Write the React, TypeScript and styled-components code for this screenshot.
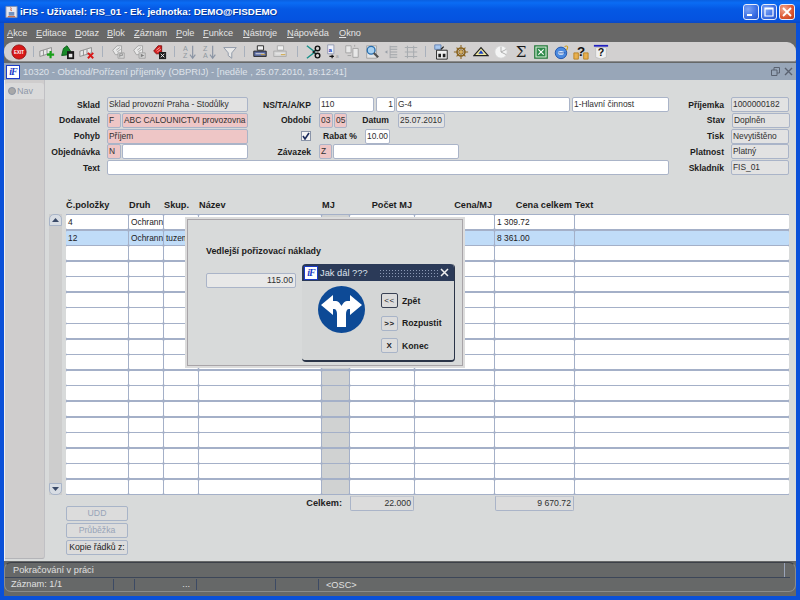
import React from "react";
import styled, { createGlobalStyle } from "styled-components";

const Global = createGlobalStyle`
    html, body { margin: 0; padding: 0; background: #0a50d8; overflow: hidden; }
    * { box-sizing: border-box; }
`

const font = `"Liberation Sans", Arial, sans-serif`

// Outer window

const Desk = styled.div`
    width: 800px;
    height: 600px;
    display: flex;
    flex-direction: column;
    font-family: ${font};
    font-size: 8.4px;
    color: #222;
    background: #0a50d8;
    overflow: hidden;
`

const TitleBar = styled.div`
    height: 23px;
    flex: none;
    display: flex;
    align-items: center;
    padding: 0 5px 0 5px;
    background: linear-gradient(180deg, #0a5fe0 0%, #0a6cf4 12%, #0558e4 40%, #0553e0 85%, #0a48c4 100%);
`

const TitleText = styled.span`
    margin-left: 2px;
    color: #fff;
    font-size: 9.8px;
    font-weight: bold;
    text-shadow: 1px 1px 0 #0a3a9a;
`

const WinButtons = styled.div`
    margin-left: auto;
    display: flex;
    gap: 2px;
`

const WinButton = styled.div<{ $close?: boolean }>`
    width: 16px;
    height: 16px;
    border: 1px solid #e8eefc;
    border-radius: 3px;
    display: flex;
    align-items: center;
    justify-content: center;
    background: ${({ $close }) => $close
        ? "radial-gradient(circle at 30% 30%, #f0a890, #dc5530 60%, #b83a18)"
        : "radial-gradient(circle at 30% 30%, #7ea4f4, #3a6ee4 60%, #2250c8)"};
`

const Frame = styled.div`
    flex: 1;
    display: flex;
    flex-direction: column;
    margin: 0 4px 4px 4px;
    min-height: 0;
    background: #666868;
`

const MenuBar = styled.div`
    height: 19px;
    flex: none;
    display: flex;
    align-items: center;
    padding-left: 3px;
    background: #686868;
    color: #e4e4e4;
    font-size: 9.2px;
`

const MenuItem = styled.span<{ $w: number }>`
    width: ${({ $w }) => $w}px;
    flex: none;
    u { text-decoration: underline; }
`

const ToolBar = styled.div`
    height: 20px;
    flex: none;
    display: flex;
    align-items: center;
    padding-left: 5px;
    background: #d2d0d0;
    border-radius: 9px 9px 2px 9px;
    border-bottom: 1px solid #8a8a8a;
`

const ToolSlot = styled.div<{ $w?: number }>`
    width: ${({ $w }) => $w ?? 20}px;
    height: 18px;
    flex: none;
    display: flex;
    align-items: center;
    justify-content: center;
`

const ToolSep = styled.div<{ $w: number }>`
    width: 1px;
    height: 11px;
    margin: 0 ${({ $w }) => ($w - 1) / 2}px;
    flex: none;
    background: #a8b0bc;
`

// Inner document window

const DocTitle = styled.div`
    height: 17px;
    flex: none;
    margin-top: 1px;
    display: flex;
    align-items: center;
    padding: 0 3px 0 2px;
    background: #98a6b8;
    color: #dfe3ea;
    font-size: 9.4px;
`

const DocTitleText = styled.span`
    margin-left: 3px;
`

const DocControls = styled.div`
    margin-left: auto;
    display: flex;
    gap: 4px;
    align-items: center;
`

const Logo = styled.div`
    width: 14px;
    height: 14px;
    flex: none;
    background: #fff;
    border: 1px solid #1a3ac8;
    color: #1a3ac8;
    font: italic bold 10px/12px "Liberation Serif", serif;
    text-align: center;
    letter-spacing: -1px;
`

const Body = styled.div`
    flex: 1;
    display: flex;
    min-height: 0;
    background: #d8dada;
    border-left: 1px solid #f0f0f0;
`

const NavPane = styled.div`
    width: 40px;
    flex: none;
    background: #cfcdcd;
    border-right: 1px solid #c0c0c4;
    border-bottom: 1px solid #b4b4b8;
    border-radius: 0 0 3px 0;
    padding-top: 3px;
    margin-bottom: 2px;
`

const NavTab = styled.div`
    height: 16px;
    display: flex;
    align-items: center;
    gap: 1px;
    padding-left: 3px;
    background: #dadada;
    border-radius: 3px 3px 0 0;
    color: #8e98a8;
    font-size: 9px;
`

const NavDot = styled.span`
    width: 8px;
    height: 8px;
    border-radius: 50%;
    background: #a8a8a8;
    border: 1px solid #8a94a4;
`

const Main = styled.div`
    flex: 1;
    position: relative;
    min-width: 0;
`

// Header form

const Form = styled.div`
    display: flex;
    flex-direction: column;
    gap: 0.75px;
    padding-top: 17px;
`

const FormRow = styled.div`
    display: flex;
    align-items: center;
    height: 15px;
`

const Label = styled.div<{ $w: number; $ml?: number; $left?: boolean }>`
    width: ${({ $w }) => $w}px;
    margin-left: ${({ $ml }) => $ml ?? 0}px;
    flex: none;
    text-align: ${({ $left }) => $left ? "left" : "right"};
    font-size: 8.6px;
    font-weight: bold;
    color: #1c1c1c;
    white-space: nowrap;
`

const toneBg: Record<string, string> = {
    white: "#ffffff",
    pink: "#eec6c6",
    gray: "#e2e2e2",
}

const Field = styled.div<{ $w: number; $ml?: number; $tone?: string; $right?: boolean }>`
    width: ${({ $w }) => $w}px;
    margin-left: ${({ $ml }) => $ml ?? 0}px;
    height: 15px;
    flex: none;
    padding: 0 1px;
    overflow: hidden;
    white-space: nowrap;
    line-height: 13px;
    font-size: 8.4px;
    text-align: ${({ $right }) => $right ? "right" : "left"};
    color: #303030;
    background: ${({ $tone }) => toneBg[$tone ?? "white"]};
    border: 1px solid #aab4c8;
    border-radius: 2px;
`

const Check = styled.div`
    width: 10px;
    height: 10px;
    margin-left: 53px;
    flex: none;
    background: #f4f4f4;
    border: 1px solid #8a94a8;
    display: flex;
    align-items: center;
    justify-content: center;
`

// Block of rows

const columns = "62px 34px 34px 122px 27px 64px 79px 79px 214px"

const TableHead = styled.div`
    display: grid;
    grid-template-columns: ${columns};
    gap: 1px;
    margin: 24px 0 0 21px;
    height: 15px;
    align-items: start;
    padding-top: 1px;
`

const HeadCell = styled.div<{ $right?: boolean }>`
    font-size: 9.2px;
    font-weight: bold;
    color: #1c1c1c;
    white-space: nowrap;
    text-align: ${({ $right }) => $right ? "right" : "left"};
    padding-right: ${({ $right }) => $right ? "2px" : "0"};
`

const TableWrap = styled.div`
    display: flex;
    padding-left: 4px;
`

const Scroller = styled.div`
    width: 13px;
    height: 281px;
    flex: none;
    margin-right: 4px;
    display: flex;
    flex-direction: column;
    background: #cdcdcd;
`

const ScrollBtn = styled.div<{ $down?: boolean }>`
    height: 12px;
    flex: none;
    display: flex;
    align-items: center;
    justify-content: center;
    margin-top: ${({ $down }) => $down ? "auto" : "0"};
    background: #d8dde4;
    border: 1px solid #a8b4c8;
    border-radius: ${({ $down }) => $down ? "0 0 5px 5px" : "5px 5px 0 0"};
`

const Table = styled.div`
    display: grid;
    grid-template-columns: ${columns};
    grid-template-rows: repeat(18, 1fr);
    gap: 1.5px 1px;
    height: 281px;
    background: #a4b0c8;
    border-top: 1px solid #a4b0c8;
    border-bottom: 1px solid #a4b0c8;
`

const Cell = styled.div<{ $on?: boolean; $gray?: boolean }>`
    padding: 0 2px;
    overflow: hidden;
    white-space: nowrap;
    font-size: 8.4px;
    line-height: 14px;
    color: #222;
    border-radius: 1px;
    background: ${({ $on, $gray }) => $on ? "#c0dcf8" : $gray ? "#d0d2d2" : "#ffffff"};
`

const TableFoot = styled.div`
    display: grid;
    grid-template-columns: ${columns};
    gap: 1px;
    margin: 1px 0 0 21px;
    align-items: start;
`

const ButtonStack = styled.div`
    display: flex;
    flex-direction: column;
    gap: 2px;
    padding-top: 10px;
`

const FormButton = styled.div<{ $off?: boolean }>`
    height: 15px;
    border: 1px solid #a8b4c8;
    border-radius: 2px;
    background: #dcdcdc;
    text-align: center;
    line-height: 13px;
    font-size: 8.7px;
    white-space: nowrap;
    color: ${({ $off }) => $off ? "#98a4b8" : "#222"};
`

const TotalLabel = styled.div`
    grid-column: 4 / span 2;
    padding-right: 7px;
    text-align: right;
    font-size: 9.2px;
    font-weight: bold;
    line-height: 15px;
`

const TotalField = styled.div<{ $col: number }>`
    grid-column: ${({ $col }) => $col};
    height: 15px;
    padding: 0 2px;
    text-align: right;
    line-height: 13px;
    font-size: 8.7px;
    color: #303030;
    background: #dcdcdc;
    border: 1px solid #aab4c8;
    border-top-color: #c4c8d0;
    border-radius: 0 0 2px 2px;
`

// Overlay with the dialog

const Sheet = styled.div`
    position: absolute;
    left: 142px;
    top: 139px;
    width: 276px;
    height: 147px;
    background: #d8dada;
    border: 1px solid #a8a4a8;
    outline: 2px solid #dcdcdc;
`

const SheetTitle = styled.div`
    margin: 26px 0 0 18px;
    font-size: 8.9px;
    font-weight: bold;
    color: #1c1c1c;
`

const SheetValue = styled.div`
    margin: 17px 0 0 18px;
    width: 90px;
    height: 15px;
    padding: 0 2px;
    text-align: right;
    line-height: 13px;
    font-size: 8.7px;
    color: #303030;
    background: #e8e8e8;
    border: 1px solid #aab4c8;
    border-radius: 2px;
`

const Dialog = styled.div`
    position: absolute;
    left: 114px;
    top: 44px;
    width: 153px;
    height: 98px;
    background: #d4d6d6;
    border-right: 1px solid #2a3448;
    border-bottom: 2px solid #2a3448;
    border-radius: 4px;
    display: flex;
    flex-direction: column;
`

const DialogBar = styled.div`
    height: 17px;
    flex: none;
    display: flex;
    align-items: center;
    padding: 0 5px 0 2px;
    background: #2b3a58;
    border-radius: 4px 4px 0 0;
    color: #dfe4ee;
    font-size: 9.3px;
`

const DialogCaption = styled.span`
    margin-left: 2px;
    width: 56px;
    flex: none;
    white-space: nowrap;
`

const DialogGrip = styled.div`
    width: 61px;
    height: 8px;
    margin-left: 3px;
    flex: none;
    background-image: radial-gradient(#8a98b4 0.6px, transparent 0.8px);
    background-size: 3px 3px;
`

const DialogClose = styled.div`
    margin-left: auto;
    display: flex;
`

const DialogBody = styled.div`
    flex: 1;
    display: flex;
    min-height: 0;
`

const SignBox = styled.div`
    width: 79px;
    flex: none;
    padding: 5px 0 0 16px;
`

const Choices = styled.div`
    display: flex;
    flex-direction: column;
    gap: 7.5px;
    padding-top: 12px;
`

const Choice = styled.div`
    display: flex;
    align-items: center;
    gap: 4px;
    font-size: 8.7px;
    font-weight: bold;
    color: #1c1c1c;
`

const ChoiceKey = styled.div<{ $focus?: boolean }>`
    width: 17px;
    height: 15px;
    display: flex;
    align-items: center;
    justify-content: center;
    font-size: 8px;
    font-weight: ${({ $focus }) => $focus ? "normal" : "bold"};
    letter-spacing: 0.5px;
    background: #dcdcdc;
    border: 1px solid ${({ $focus }) => $focus ? "#3a4254" : "#a8b4c8"};
    border-radius: 2px;
`

// Status area

const Status = styled.div`
    height: 30px;
    flex: none;
    margin: 1px 0 4px 0;
    display: flex;
    flex-direction: column;
    background: #666868;
    border: 1px solid #8a8c8c;
    border-top: 1px solid #3c4048;
    border-radius: 7px;
    color: #e0e0e0;
    font-size: 9.2px;
`

const StatusTop = styled.div`
    height: 15px;
    flex: none;
    display: flex;
    align-items: center;
    padding-left: 8px;
    border-bottom: 1px solid #3c4658;
    margin-right: 5px;
`

const StatusGrip = styled.div`
    margin-left: auto;
    width: 1px;
    height: 14px;
    margin-right: 5px;
    background: #9aa4b8;
`

const StatusBottom = styled.div`
    flex: 1;
    display: flex;
    align-items: center;
    padding-left: 6px;
`

const StatusCell = styled.div<{ $w: number; $right?: boolean }>`
    width: ${({ $w }) => $w}px;
    height: 11px;
    line-height: 11px;
    flex: none;
    padding-right: 6px;
    text-align: ${({ $right }) => $right ? "right" : "left"};
    border-right: 1px solid #3c4a64;
`

const StatusText = styled.div`
    padding-left: 7px;
`

// Drawings

const I = ({ w, children }: { w?: number; children: React.ReactNode }) => (
    <ToolSlot $w={w}>
        <svg width="16" height="16" viewBox="0 0 18 18">{children}</svg>
    </ToolSlot>
)

const Row3d = ({ c = "#8a8a8a" }: { c?: string }) => (
    <g fill="#e8e8e8" stroke={c} strokeWidth="1">
        <path d="M1 8 L14 4 V10 L1 14 Z" />
        <path d="M5 7 V13 M9 6 V12" />
    </g>
)

const Sheet3d = ({ c = "#a0a0a0" }: { c?: string }) => (
    <g>
        <path d="M3 7 L8 2 H13 V12 H6 Z" fill="#e8e8e8" stroke={c} />
        <path d="M7 7 L11 4 M8 9 L12 6" stroke={c} />
    </g>
)

const Printer = ({ c, body }: { c: string; body: string }) => (
    <g>
        <path d="M6 2 H13 V7 H6 Z" fill="#f0f0f0" stroke={c} />
        <path d="M2 8 H16 V14 H2 Z" fill={body} stroke={c} />
        <path d="M4 11 H14" stroke="#e8e8e8" />
        <path d="M10 12 H15" stroke="#d0a030" />
    </g>
)

function Tools() {
    const p = 19.4
    return (
        <ToolBar>
            <I>
                <circle cx="9" cy="9" r="8" fill="#d81818" stroke="#901010" />
                <text x="9" y="11" textAnchor="middle" fontSize="5" fontWeight="bold" fill="#fff" fontFamily="Liberation Sans">EXIT</text>
            </I>
            <ToolSep $w={8} />
            <I><Row3d /><path d="M13 8 V16 M9 12 H17" stroke="#18a018" strokeWidth="2.4" /></I>
            <I>
                <path d="M3 13 L5 5 L9 2 L13 8 L11 12 Z" fill="#188a28" stroke="#0a5a18" />
                <path d="M9 8 H17 V17 H9 Z" fill="#181818" />
                <path d="M11 11 H15 V15 H11 Z" fill="#e8e8e8" />
            </I>
            <I><Row3d /><path d="M10 10 L16 16 M16 10 L10 16" stroke="#d81818" strokeWidth="2.2" /></I>
            <ToolSep $w={11} />
            <I><Sheet3d /><path d="M9 10 H16 V16 H9 Z" fill="#d8d8d8" stroke="#a0a0a0" /><path d="M11 15 V11 H14 V13 H11" fill="none" stroke="#909090" /></I>
            <I w={21}><Sheet3d /><path d="M9 10 H16 V16 H9 Z" fill="#d8d8d8" stroke="#a0a0a0" /><path d="M11 11 L15 13 L11 15 Z" fill="#808080" /></I>
            <I>
                <path d="M3 8 L8 2 H12 V11 H6 Z" fill="#d82020" stroke="#801010" />
                <path d="M6 7 L10 4 M7 9 L11 6" stroke="#f8b0b0" />
                <path d="M9 9 H17 V17 H9 Z" fill="#202020" />
                <path d="M11 11 L15 15 M15 11 L11 15" stroke="#fff" />
            </I>
            <ToolSep $w={11} />
            <I>
                <text x="1" y="8" fontSize="8" fill="#9098a0" fontFamily="Liberation Sans">A</text>
                <text x="1" y="16" fontSize="8" fill="#9098a0" fontFamily="Liberation Sans">Z</text>
                <path d="M12 2 V15 M9 12 L12 16 L15 12" fill="none" stroke="#8a94a4" strokeWidth="1.3" />
            </I>
            <I>
                <text x="1" y="8" fontSize="8" fill="#9098a0" fontFamily="Liberation Sans">Z</text>
                <text x="1" y="16" fontSize="8" fill="#9098a0" fontFamily="Liberation Sans">A</text>
                <path d="M12 2 V15 M9 12 L12 16 L15 12" fill="none" stroke="#8a94a4" strokeWidth="1.3" />
            </I>
            <I><path d="M2 4 H16 L11 10 V16 L7 13 V10 Z" fill="#e8e8e8" stroke="#8a94a4" /></I>
            <ToolSep $w={9} />
            <I w={21}><Printer c="#202020" body="#5a6aa0" /></I>
            <I><Printer c="#a8a8a8" body="#d8d8d8" /></I>
            <ToolSep $w={14} />
            <I w={p}>
                <path d="M1 2 L10 9 L1 16" fill="none" stroke="#189088" strokeWidth="1.6" />
                <circle cx="13" cy="5" r="2.6" fill="none" stroke="#111" strokeWidth="1.6" />
                <circle cx="13" cy="13" r="2.6" fill="none" stroke="#111" strokeWidth="1.6" />
                <path d="M11 7 L8 9 L11 11" fill="none" stroke="#111" strokeWidth="1.4" />
            </I>
            <I w={p}>
                <path d="M3 1 H10 V11 H3 Z" fill="#eef0f8" stroke="#9098b0" />
                <text x="4" y="9" fontSize="7" fontWeight="bold" fill="#1838b8" fontFamily="Liberation Sans">a</text>
                <path d="M5 14 H10 M8 12 V16" stroke="#111" strokeWidth="1.3" />
                <text x="12" y="16" fontSize="6" fill="#a0a0a0" fontFamily="Liberation Sans">a</text>
            </I>
            <I w={p}>
                <path d="M2 2 H8 V10 H2 Z" fill="#e8e8e8" stroke="#a0a0a0" />
                <path d="M10 5 H16 V15 H10 Z" fill="#e8e8e8" stroke="#a0a0a0" />
                <path d="M4 13 H8 M12 3 V1" stroke="#a0a0a0" />
            </I>
            <I w={p}>
                <path d="M3 2 H14 V16 H3 Z" fill="#e4e4e4" stroke="#a0a0a0" />
                <circle cx="8" cy="7" r="4.4" fill="#a8d0f0" stroke="#2a70b0" strokeWidth="1.5" />
                <path d="M11 10 L16 15" stroke="#505050" strokeWidth="2.4" />
            </I>
            <I w={p}>
                <path d="M2 9 L5 7 V11 Z" fill="#9aa0a8" />
                <path d="M8 3 H16 M8 6 H16 M8 9 H16 M8 12 H16 M8 15 H16" stroke="#a0a4a8" strokeWidth="1.2" />
                <path d="M8 2 V16" stroke="#a0a4a8" />
            </I>
            <I w={p}>
                <path d="M2 4 H16 M2 9 H16 M2 14 H16 M5 2 V16 M12 2 V16" stroke="#a8acb0" strokeWidth="1.2" />
            </I>
            <ToolSep $w={11} />
            <I>
                <path d="M2 1 H9 V6 H2 Z" fill="#a8c8f0" stroke="#6080b0" />
                <path d="M4 7 H16 V17 H4 Z" fill="#f0f0f0" stroke="#181818" />
                <path d="M6 11 H9 V15 H6 Z M11 11 H14 V15 H11 Z" fill="#202020" />
                <path d="M9 6 L12 3" stroke="#181818" strokeWidth="1.4" />
            </I>
            <I>
                <circle cx="9" cy="9" r="4.5" fill="none" stroke="#8a6420" strokeWidth="1.8" />
                <path d="M9 1 V17 M1 9 H17 M4 4 L14 14 M14 4 L4 14" stroke="#8a6420" strokeWidth="1.2" />
                <circle cx="9" cy="9" r="2" fill="#d8b060" />
            </I>
            <I>
                <path d="M9 4 L17 13 H1 Z" fill="#f0e8a0" stroke="#202020" strokeWidth="1.3" />
                <path d="M9 7 L12 11 H6 Z" fill="#1840c8" />
            </I>
            <I>
                <circle cx="9" cy="9" r="7" fill="#f4f4f4" stroke="#d0d0d0" />
                <path d="M9 9 L15 6 M9 9 L15 12 M9 3 V9" stroke="#a8a8a8" />
            </I>
            <I><text x="9" y="15" textAnchor="middle" fontSize="17" fill="#1c1c1c" fontFamily="DejaVu Serif">Σ</text></I>
            <I>
                <path d="M2 2 H16 V16 H2 Z" fill="#d8ecd8" stroke="#207838" strokeWidth="1.4" />
                <path d="M4 4 H14 V14 H4 Z" fill="#2e8a4a" />
                <path d="M6 6 L12 12 M12 6 L6 12" stroke="#fff" strokeWidth="1.3" />
            </I>
            <I>
                <circle cx="9" cy="10" r="6.5" fill="#4a8ae0" stroke="#1c50a8" />
                <ellipse cx="9" cy="10" rx="3.5" ry="2" fill="#e8f0fc" />
                <path d="M6 10 H14" stroke="#1c50a8" />
                <path d="M13 3 C16 1 18 3 15 7" fill="none" stroke="#d0a020" strokeWidth="1.2" />
            </I>
            <I>
                <path d="M1 10 H6 V17 H1 Z M12 10 H17 V17 H12 Z" fill="#e8b050" stroke="#b88020" />
                <text x="9" y="13" textAnchor="middle" fontSize="15" fontWeight="bold" fill="#111" fontFamily="Liberation Sans">?</text>
            </I>
            <I>
                <path d="M1 2 H17" stroke="#2020c0" strokeWidth="2" />
                <path d="M3 4 H15 V15 L9 17 L3 15 Z" fill="#f0f0f0" stroke="#c0c0c0" />
                <text x="9" y="14" textAnchor="middle" fontSize="12" fontWeight="bold" fill="#111" fontFamily="Liberation Sans">?</text>
            </I>
        </ToolBar>
    )
}

const rows = Array.from({ length: 18 }, (_, i) => i)
const filled: Record<number, string[]> = {
    0: ["4", "Ochrann", "", "", "", "", "", "1 309.72", ""],
    1: ["12", "Ochrann", "tuzem", "", "", "", "", "8 361.00", ""],
}

const menu: [string, string, number][] = [
    ["A", "kce", 29], ["E", "ditace", 39], ["D", "otaz", 32], ["B", "lok", 27], ["Z", "áznam", 42],
    ["P", "ole", 27], ["F", "unkce", 40], ["N", "ástroje", 44], ["N", "ápověda", 52], ["O", "kno", 30],
]

export default function App() {
    return (
        <Desk>
            <Global />
            <TitleBar>
                <svg width="13" height="14" viewBox="0 0 14 14">
                    <path d="M1 1 H13 V13 H1 Z" fill="#e8e8f0" stroke="#8090b0" />
                    <path d="M4 7 H10 V11 H4 Z" fill="#7090c0" />
                    <path d="M6 2 C8 3 5 4 7 6 M3 12 H11" stroke="#c85020" fill="none" />
                </svg>
                <TitleText>iFIS - Uživatel: FIS_01 - Ek. jednotka: DEMO@FISDEMO</TitleText>
                <WinButtons>
                    <WinButton>
                        <svg width="10" height="10" viewBox="0 0 10 10"><path d="M1 7 H6 V9 H1 Z" fill="#fff" /></svg>
                    </WinButton>
                    <WinButton>
                        <svg width="10" height="10" viewBox="0 0 10 10"><path d="M1 1 H9 V9 H1 Z M1 2 H9" fill="none" stroke="#fff" strokeWidth="1.2" /></svg>
                    </WinButton>
                    <WinButton $close>
                        <svg width="10" height="10" viewBox="0 0 10 10"><path d="M1 1 L9 9 M9 1 L1 9" stroke="#fff" strokeWidth="1.8" /></svg>
                    </WinButton>
                </WinButtons>
            </TitleBar>
            <Frame>
                <MenuBar>
                    {menu.map(([k, rest, w]) => (
                        <MenuItem key={k + rest} $w={w}><u>{k}</u>{rest}</MenuItem>
                    ))}
                </MenuBar>
                <Tools />
                <DocTitle>
                    <Logo>iF</Logo>
                    <DocTitleText>10320 - Obchod/Pořízení příjemky (OBPRIJ) - [neděle , 25.07.2010, 18:12:41]</DocTitleText>
                    <DocControls>
                        <svg width="9" height="9" viewBox="0 0 9 9"><path d="M0.5 3 H6 V8.5 H0.5 Z M3 3 V0.5 H8.5 V6 H6" fill="none" stroke="#5a6270" /></svg>
                        <svg width="9" height="9" viewBox="0 0 9 9"><path d="M1 1 L8 8 M8 1 L1 8" stroke="#5a6270" strokeWidth="1.4" /></svg>
                    </DocControls>
                </DocTitle>
                <Body>
                    <NavPane>
                        <NavTab><NavDot />Nav</NavTab>
                    </NavPane>
                    <Main>
                        <Form>
                            <FormRow>
                                <Label $w={55}>Sklad</Label>
                                <Field $w={141} $ml={7} $tone="gray">Sklad provozní Praha - Stodůlky</Field>
                                <Label $w={63}>NS/TA/A/KP</Label>
                                <Field $w={55} $ml={8}>110</Field>
                                <Field $w={19} $ml={2} $right>1</Field>
                                <Field $w={174} $ml={1}>G-4</Field>
                                <Field $w={97} $ml={2}>1-Hlavní činnost</Field>
                                <Label $w={55}>Příjemka</Label>
                                <Field $w={58} $ml={7} $tone="gray">1000000182</Field>
                            </FormRow>
                            <FormRow>
                                <Label $w={55}>Dodavatel</Label>
                                <Field $w={14} $ml={7} $tone="pink">F</Field>
                                <Field $w={126} $ml={1} $tone="pink">ABC CALOUNICTVI provozovna</Field>
                                <Label $w={63}>Období</Label>
                                <Field $w={14} $ml={8} $tone="pink">03</Field>
                                <Field $w={13} $ml={1} $tone="pink">05</Field>
                                <Label $w={42}>Datum</Label>
                                <Field $w={47} $ml={9} $tone="gray">25.07.2010</Field>
                                <Label $w={280}>Stav</Label>
                                <Field $w={58} $ml={7} $tone="gray">Doplněn</Field>
                            </FormRow>
                            <FormRow>
                                <Label $w={55}>Pohyb</Label>
                                <Field $w={141} $ml={7} $tone="pink">Příjem</Field>
                                <Check>
                                    <svg width="8" height="8" viewBox="0 0 8 8"><path d="M1 4 L3 7 L7 1" fill="none" stroke="#1c2c5c" strokeWidth="1.6" /></svg>
                                </Check>
                                <Label $w={33} $ml={12} $left>Rabat %</Label>
                                <Field $w={25} $ml={9}>10.00</Field>
                                <Label $w={334}>Tisk</Label>
                                <Field $w={58} $ml={7} $tone="gray">Nevytištěno</Field>
                            </FormRow>
                            <FormRow>
                                <Label $w={55}>Objednávka</Label>
                                <Field $w={14} $ml={7} $tone="pink">N</Field>
                                <Field $w={126} $ml={1}></Field>
                                <Label $w={63}>Závazek</Label>
                                <Field $w={13} $ml={8} $tone="pink">Z</Field>
                                <Field $w={126} $ml={1}></Field>
                                <Label $w={265}>Platnost</Label>
                                <Field $w={58} $ml={7} $tone="gray">Platný</Field>
                            </FormRow>
                            <FormRow>
                                <Label $w={55}>Text</Label>
                                <Field $w={562} $ml={7}></Field>
                                <Label $w={55}>Skladník</Label>
                                <Field $w={58} $ml={7} $tone="gray">FIS_01</Field>
                            </FormRow>
                        </Form>
                        <TableHead>
                            <HeadCell>Č.položky</HeadCell>
                            <HeadCell>Druh</HeadCell>
                            <HeadCell>Skup.</HeadCell>
                            <HeadCell>Název</HeadCell>
                            <HeadCell>MJ</HeadCell>
                            <HeadCell $right>Počet MJ</HeadCell>
                            <HeadCell $right>Cena/MJ</HeadCell>
                            <HeadCell $right>Cena celkem</HeadCell>
                            <HeadCell>Text</HeadCell>
                        </TableHead>
                        <TableWrap>
                            <Scroller>
                                <ScrollBtn>
                                    <svg width="7" height="4" viewBox="0 0 7 4"><path d="M0 4 L3.5 0 L7 4 Z" fill="#3a4a68" /></svg>
                                </ScrollBtn>
                                <ScrollBtn $down>
                                    <svg width="7" height="4" viewBox="0 0 7 4"><path d="M0 0 L3.5 4 L7 0 Z" fill="#3a4a68" /></svg>
                                </ScrollBtn>
                            </Scroller>
                            <Table>
                                {rows.flatMap(r =>
                                    Array.from({ length: 9 }, (_, c) => (
                                        <Cell key={`${r}-${c}`} $on={r === 1} $gray={c === 4}>
                                            {filled[r]?.[c] ?? ""}
                                        </Cell>
                                    ))
                                )}
                            </Table>
                        </TableWrap>
                        <TableFoot>
                            <ButtonStack>
                                <FormButton $off>UDD</FormButton>
                                <FormButton $off>Průběžka</FormButton>
                                <FormButton>Kopie řádků z:</FormButton>
                            </ButtonStack>
                            <TotalLabel>Celkem:</TotalLabel>
                            <TotalField $col={6}>22.000</TotalField>
                            <TotalField $col={8}>9 670.72</TotalField>
                        </TableFoot>
                        <Sheet>
                            <SheetTitle>Vedlejší pořizovací náklady</SheetTitle>
                            <SheetValue>115.00</SheetValue>
                            <Dialog>
                                <DialogBar>
                                    <Logo>iF</Logo>
                                    <DialogCaption>Jak dál ???</DialogCaption>
                                    <DialogGrip />
                                    <DialogClose>
                                        <svg width="9" height="9" viewBox="0 0 9 9"><path d="M1 1 L8 8 M8 1 L1 8" stroke="#f0f0f0" strokeWidth="1.5" /></svg>
                                    </DialogClose>
                                </DialogBar>
                                <DialogBody>
                                    <SignBox>
                                        <svg width="47" height="47" viewBox="0 0 47 47">
                                            <circle cx="23.5" cy="23.5" r="23.5" fill="#0d4a96" />
                                            <path d="M3 19 L15 9 V15 H18 C21 15 23.5 20 23.5 20 C23.5 20 26 15 29 15 H32 V9 L44 19 L32 29 V23 H31 C29 23 28 25 28 28 V41 H19 V28 C19 25 18 23 16 23 H15 V29 Z" fill="#fff" />
                                        </svg>
                                    </SignBox>
                                    <Choices>
                                        <Choice><ChoiceKey $focus>&lt;&lt;</ChoiceKey>Zpět</Choice>
                                        <Choice><ChoiceKey>&gt;&gt;</ChoiceKey>Rozpustit</Choice>
                                        <Choice><ChoiceKey>X</ChoiceKey>Konec</Choice>
                                    </Choices>
                                </DialogBody>
                            </Dialog>
                        </Sheet>
                    </Main>
                </Body>
                <Status>
                    <StatusTop>
                        Pokračování v práci
                        <StatusGrip />
                    </StatusTop>
                    <StatusBottom>
                        <StatusCell $w={103}>Záznam: 1/1</StatusCell>
                        <StatusCell $w={21} />
                        <StatusCell $w={62} $right>...</StatusCell>
                        <StatusCell $w={79} />
                        <StatusCell $w={43} />
                        <StatusText>&lt;OSC&gt;</StatusText>
                    </StatusBottom>
                </Status>
            </Frame>
        </Desk>
    )
}
